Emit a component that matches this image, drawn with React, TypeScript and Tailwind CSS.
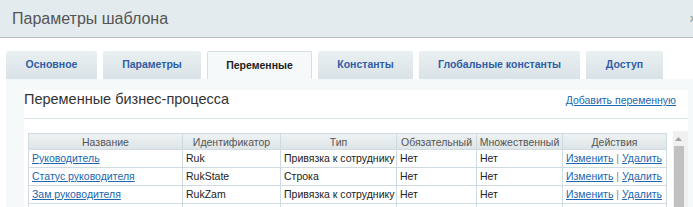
import React from 'react';

const tabs = [
    { label: 'Основное', w: 'w-[91px]' },
    { label: 'Параметры', w: 'w-[98px]' },
    { label: 'Переменные', w: 'w-[105px]', active: true },
    { label: 'Константы', w: 'w-[95px]' },
    { label: 'Глобальные константы', w: 'w-[161px]' },
    { label: 'Доступ', w: 'w-[77px]' },
];

const rows = [
    { name: 'Руководитель', id: 'Ruk', type: 'Привязка к сотруднику' },
    { name: 'Статус руководителя', id: 'RukState', type: 'Строка' },
    { name: 'Зам руководителя', id: 'RukZam', type: 'Привязка к сотруднику' },
    { name: 'Секретарь', id: 'Sekr', type: 'Привязка к сотруднику' },
];

const heads = [
    { label: 'Название', w: 'w-[154px]' },
    { label: 'Идентификатор', w: 'w-[98px]' },
    { label: 'Тип', w: 'w-[116px]' },
    { label: 'Обязательный', w: 'w-[80px]' },
    { label: 'Множественный', w: 'w-[86px]' },
    { label: 'Действия', w: 'w-[104px]' },
];

export default function App() {
    return (
        <div className="w-[693px] h-[207px] overflow-hidden bg-white font-['Liberation_Sans',Arial,sans-serif]">
            {/* Dialog header */}
            <div className="h-[38px] bg-[#e3ebee] border-b border-[#b9c0c3] flex items-center justify-between pl-[12px]">
                <span className="text-[16px] text-[#555555] leading-none">Параметры шаблона</span>
                <span className="text-[13px] text-[#9aa5ab] font-bold translate-x-[4px]">×</span>
            </div>

            {/* Tabs */}
            <div className="flex items-end gap-[6px] pl-[6px] h-[41px]">
                {tabs.map((t) => (
                    <div
                        key={t.label}
                        className={`${t.w} h-[28px] flex items-center justify-center text-[10.5px] font-bold rounded-t-[2px] ${
                            t.active
                                ? 'bg-[#f5f9f9] border border-b-0 border-[#d5e0e5] text-[#222222]'
                                : 'bg-gradient-to-b from-[#eaf0f2] to-[#d9e2e6] text-[#2f5ea5]'
                        }`}
                    >
                        {t.label}
                    </div>
                ))}
            </div>

            {/* Tab body */}
            <div className="ml-[6px] bg-[#f5f9f9] pt-[11px] pl-[18px] pr-[5px] h-[128px]">
                <div className="bg-white h-full">
                    <div className="flex items-end justify-between h-[29px] border-b border-[#dde6ea] pr-[12px]">
                        <span className="text-[14.5px] text-[#333333] leading-none mb-[12px]">Переменные бизнес-процесса</span>
                        <a href="#" className="text-[10.5px] text-[#2067b0] underline mb-[9px]">Добавить переменную</a>
                    </div>
                    <div className="flex pt-[14px] pl-[4px]">
                        <table className="border-collapse text-[10.5px] table-fixed w-[638px] shrink-0 self-start whitespace-nowrap">
                            <thead>
                                <tr className="h-[16px] bg-gradient-to-b from-[#eef2f3] to-[#dde4e7]">
                                    {heads.map((h) => (
                                        <th
                                            key={h.label}
                                            className={`${h.w} border border-[#cfdae1] font-normal text-[#555555] text-center p-0 leading-[14px]`}
                                        >
                                            {h.label}
                                        </th>
                                    ))}
                                </tr>
                            </thead>
                            <tbody>
                                {rows.map((r) => (
                                    <tr key={r.id} className="h-[18px]">
                                        <td className="border border-[#cfdae1] pl-[3px] overflow-hidden">
                                            <a href="#" className="text-[#2067b0] underline">{r.name}</a>
                                        </td>
                                        <td className="border border-[#cfdae1] pl-[3px] text-[#222222] overflow-hidden">{r.id}</td>
                                        <td className="border border-[#cfdae1] pl-[3px] text-[#222222] overflow-hidden">{r.type}</td>
                                        <td className="border border-[#cfdae1] pl-[3px] text-[#222222] overflow-hidden">Нет</td>
                                        <td className="border border-[#cfdae1] pl-[3px] text-[#222222] overflow-hidden">Нет</td>
                                        <td className="border border-[#cfdae1] pl-[3px] text-[#888888] overflow-hidden">
                                            <a href="#" className="text-[#2067b0] underline">Изменить</a>
                                            {' | '}
                                            <a href="#" className="text-[#2067b0] underline">Удалить</a>
                                        </td>
                                    </tr>
                                ))}
                            </tbody>
                        </table>
                        {/* Scrollbar */}
                        <div className="ml-[6px] -mt-[2px] w-[15px] h-[80px] shrink-0 bg-[#f1f1f1] flex flex-col items-start">
                            <div className="h-[15px] w-[11px] flex items-center justify-center">
                                <svg width="7" height="4" viewBox="0 0 7 4">
                                    <path d="M0 4 L3.5 0 L7 4 Z" fill="#a3a3a3" />
                                </svg>
                            </div>
                            <div className="ml-[1px] w-[10px] flex-1 bg-[#c1c1c1]" />
                        </div>
                    </div>
                </div>
            </div>
        </div>
    );
}
